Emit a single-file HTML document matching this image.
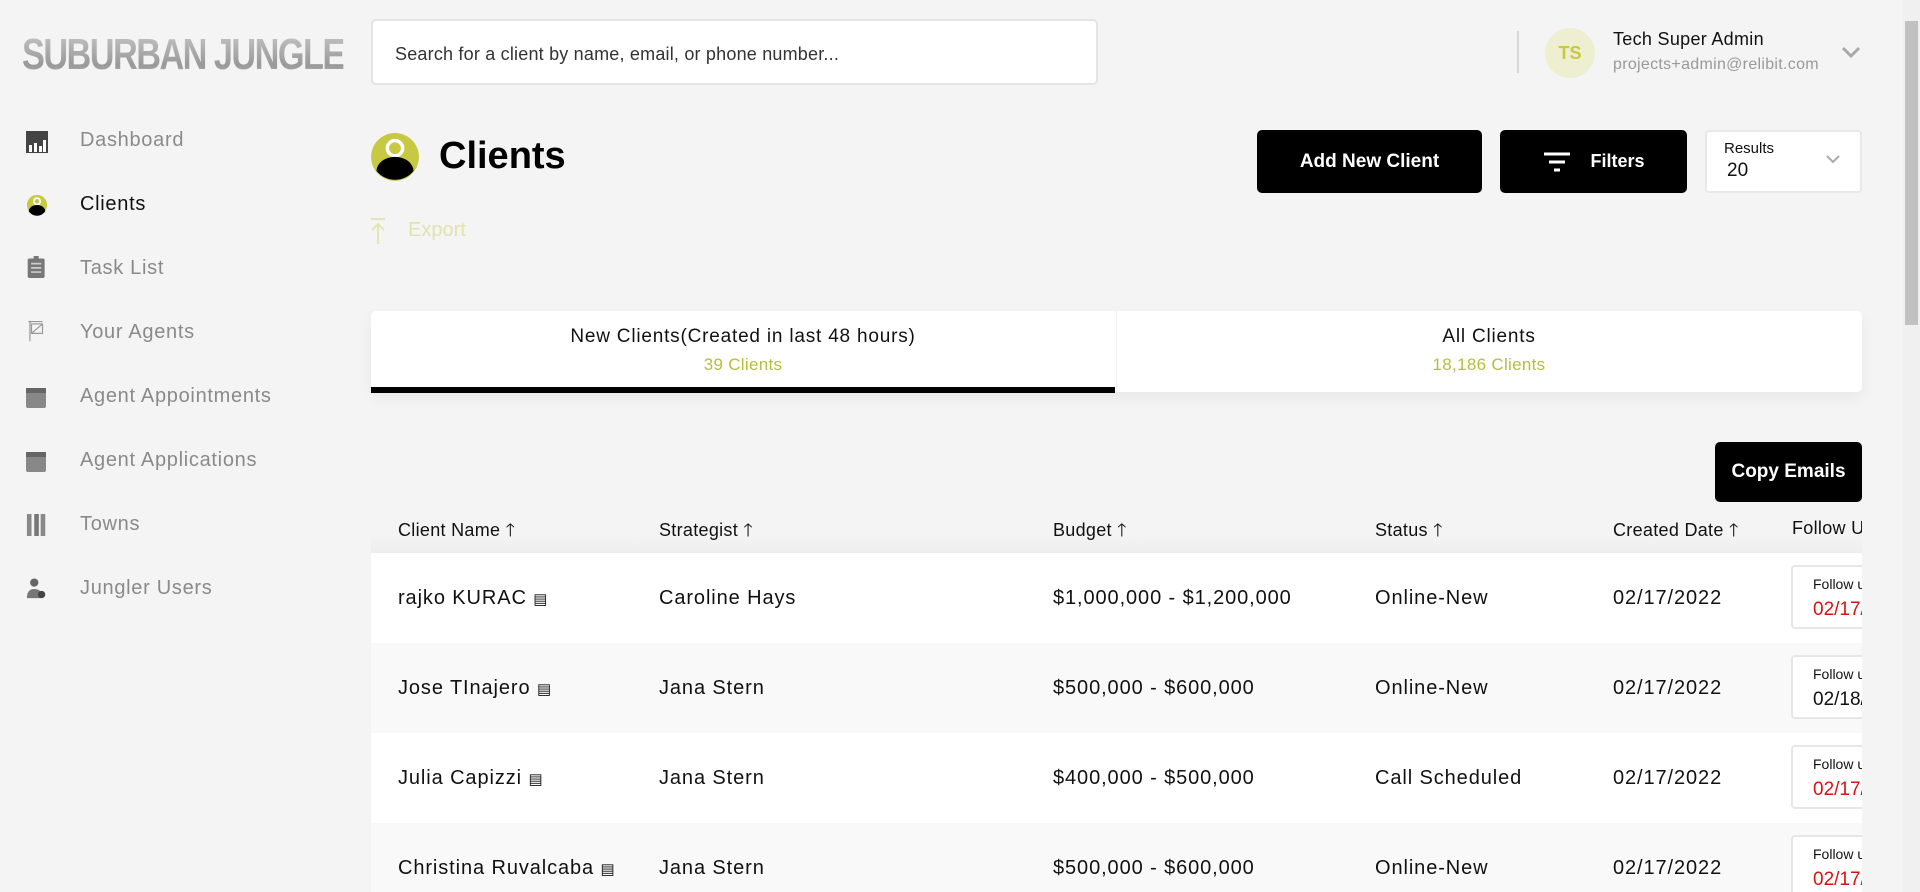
<!DOCTYPE html>
<html><head><meta charset="utf-8"><style>
*{box-sizing:border-box;margin:0;padding:0}
body{width:1920px;height:892px;overflow:hidden;background:#f4f4f4;font-family:"Liberation Sans",sans-serif;position:relative;color:#111}
.a{position:absolute}
.nav{position:absolute;left:80px;font-size:20px;letter-spacing:.7px;color:#8a8a8a}
.ic{position:absolute;left:26px;width:22px;height:22px}
.btn{position:absolute;background:#000;color:#fff;border-radius:5px;font-weight:bold;font-size:18px;display:flex;align-items:center;justify-content:center}
.th{position:absolute;top:518px;font-size:18px;letter-spacing:.3px;color:#111}
.row{position:absolute;left:371px;width:1491px;height:90px}
.row div{position:absolute;top:34px;font-size:20px;letter-spacing:.9px;color:#111}
.row .fu{position:absolute;left:1420px;top:12px;width:160px;height:64px;border:2px solid #e6e6e6;border-radius:4px;background:#fff;letter-spacing:0}
.fu span{position:absolute;left:20px;top:9px;font-size:14px}
.fu b{position:absolute;left:20px;top:32px;font-weight:normal;font-size:19px}
</style></head><body>
<div class="a" style="left:22px;top:30px;font-size:44px;font-weight:bold;color:#a9a9a9;letter-spacing:-2px;white-space:nowrap;transform:scaleX(.78);transform-origin:left;background:linear-gradient(#c8c8c8,#999 70%,#bbb);-webkit-background-clip:text;color:transparent">SUBURBAN JUNGLE</div>
<div class="a" style="left:371px;top:19px;width:727px;height:66px;background:#fff;border:2px solid #e4e4e4;border-radius:5px;font-size:18px;letter-spacing:.2px;color:#333;padding:23px 0 0 22px">Search for a client by name, email, or phone number...</div>

<svg class="ic" style="top:131px" viewBox="0 0 22 22"><rect width="22" height="24" fill="#444"/><rect x="3" y="14" width="3" height="7" fill="#fff"/><rect x="8" y="12" width="3" height="9" fill="#fff"/><rect x="13" y="15" width="3" height="6" fill="#fff"/><rect x="17" y="9" width="3" height="12" fill="#fff"/></svg>
<div class="nav" style="top:129px">Dashboard</div>
<svg class="ic" style="top:194px" viewBox="0 0 22 24"><circle cx="11" cy="12" r="11" fill="#c6c941"/><circle cx="11" cy="8" r="3.5" fill="none" stroke="#fff" stroke-width="2"/><path d="M2 19a9 7 0 0 1 18 0a11 11 0 0 1-18 0z" fill="#000"/></svg>
<div class="nav" style="top:193px;color:#111">Clients</div>
<svg class="ic" style="top:256px" viewBox="0 0 22 26"><rect y="3" width="20" height="23" rx="2" fill="#777"/><rect x="7" y="0" width="6" height="5" fill="#777"/><path d="M4 9h12M4 14h12M4 19h12" stroke="#ccc" stroke-width="2"/></svg>
<div class="nav" style="top:257px">Task List</div>
<svg class="ic" style="top:320px" viewBox="0 0 22 28"><path d="M2 1v26M0 2h18M4 5h14v12H4zM4 17l14-12" stroke="#999" fill="none" stroke-width="1.5"/></svg>
<div class="nav" style="top:321px">Your Agents</div>
<svg class="ic" style="top:386px" viewBox="0 0 22 22"><rect y="2" width="20" height="20" rx="2" fill="#888"/><rect y="2" width="20" height="5" fill="#666"/></svg>
<div class="nav" style="top:385px">Agent Appointments</div>
<svg class="ic" style="top:450px" viewBox="0 0 22 22"><rect y="2" width="20" height="20" rx="2" fill="#888"/><rect y="2" width="20" height="5" fill="#666"/></svg>
<div class="nav" style="top:449px">Agent Applications</div>
<svg class="ic" style="top:514px" viewBox="0 0 22 24"><rect x="0" y="0" width="5" height="24" fill="#888"/><rect x="8" y="0" width="5" height="24" fill="#777"/><rect x="15" y="0" width="5" height="24" fill="#888"/></svg>
<div class="nav" style="top:513px">Towns</div>
<svg class="ic" style="top:578px" viewBox="0 0 22 24"><circle cx="8" cy="5" r="4.5" fill="#666"/><path d="M0 22c0-8 4-10 8-10s7 2 8 4v6z" fill="#777"/><circle cx="16" cy="18" r="4" fill="#444"/></svg>
<div class="nav" style="top:577px">Jungler Users</div>

<div class="a" style="left:1517px;top:31px;width:2px;height:42px;background:#d8d8d8"></div>
<div class="a" style="left:1545px;top:28px;width:50px;height:50px;border-radius:50%;background:#eeefd0;color:#c6c941;font-size:18px;font-weight:bold;text-align:center;line-height:50px">TS</div>
<div class="a" style="left:1613px;top:29px;font-size:18px;letter-spacing:.3px;color:#111">Tech Super Admin</div>
<div class="a" style="left:1613px;top:56px;font-size:16px;letter-spacing:.3px;color:#999">projects+admin@relibit.com</div>
<svg class="a" style="left:1841px;top:45px" width="20" height="14" viewBox="0 0 20 14"><path d="M2 3l8 8 8-8" stroke="#aaa" stroke-width="3" fill="none"/></svg>
<div class="a" style="left:1903px;top:0;width:17px;height:892px;background:#f0f0f0"></div>
<div class="a" style="left:1905px;top:21px;width:13px;height:304px;background:#c1c1c1"></div>

<svg class="a" style="left:371px;top:133px" width="48" height="50" viewBox="0 0 22 23"><circle cx="11" cy="11" r="11" fill="#c6c941"/><circle cx="11" cy="7" r="3.5" fill="none" stroke="#fff" stroke-width="1.6"/><path d="M2.5 17.5a8.5 6.5 0 0 1 17 0a11 11 0 0 1-17 0z" fill="#000"/></svg>
<div class="a" style="left:439px;top:135px;font-size:38px;font-weight:bold;color:#000">Clients</div>
<svg class="a" style="left:370px;top:218px" width="16" height="26" viewBox="0 0 16 26"><path d="M1 1h14M8 26V6M2 12l6-6 6 6" stroke="#e3e5b5" stroke-width="2" fill="none"/></svg>
<div class="a" style="left:408px;top:219px;font-size:20px;color:#e0e3aa">Export</div>

<div class="btn" style="left:1257px;top:130px;width:225px;height:63px;font-size:19px">Add New Client</div>
<div class="btn" style="left:1500px;top:130px;width:187px;height:63px"><svg width="30" height="22" viewBox="0 0 30 22" style="margin-right:18px"><path d="M2 3h26M7 11h16M12 19h6" stroke="#fff" stroke-width="3"/></svg>Filters</div>
<div class="a" style="left:1705px;top:130px;width:157px;height:63px;background:#fff;border:2px solid #e8e8e8;border-radius:4px">
<div class="a" style="left:17px;top:8px;font-size:15px">Results</div><div class="a" style="left:20px;top:28px;font-size:19px">20</div>
<svg class="a" style="left:118px;top:22px" width="16" height="12"><path d="M2 2l6 6 6-6" stroke="#aaa" stroke-width="2" fill="none"/></svg></div>

<div class="a" style="left:371px;top:311px;width:1491px;height:81px;background:#fff;border-radius:5px;box-shadow:0 6px 14px rgba(0,0,0,.05)"></div>
<div class="a" style="left:371px;top:311px;width:744px;text-align:center;font-size:19px;letter-spacing:.8px;padding-top:15px">New Clients(Created in last 48 hours)<div style="color:#b8bd3a;font-size:17px;letter-spacing:.3px;margin-top:7px">39 Clients</div></div>
<div class="a" style="left:1116px;top:311px;width:746px;text-align:center;font-size:19px;letter-spacing:.8px;padding-top:15px">All Clients<div style="color:#b8bd3a;font-size:17px;letter-spacing:.3px;margin-top:7px">18,186 Clients</div></div>
<div class="a" style="left:371px;top:387px;width:744px;height:6px;background:#000"></div>
<div class="a" style="left:1116px;top:311px;width:1px;height:81px;background:#eee"></div>

<div class="btn" style="left:1715px;top:442px;width:147px;height:60px;font-size:19px">Copy Emails</div>
<div class="a" style="left:371px;top:535px;width:1491px;height:18px;background:linear-gradient(#f4f4f4,#ededed)"></div>
<div class="th" style="left:398px">Client Name 🡑</div>
<div class="th" style="left:659px">Strategist 🡑</div>
<div class="th" style="left:1053px">Budget 🡑</div>
<div class="th" style="left:1375px">Status 🡑</div>
<div class="th" style="left:1613px">Created Date 🡑</div>
<div class="th" style="left:1792px;width:70px;overflow:hidden;white-space:nowrap">Follow Up</div>

<div style="position:absolute;left:0;top:0;width:1862px;height:892px;overflow:hidden">
<div class="row" style="top:553px;background:#fff"><div style="left:27px">rajko KURAC <small style="font-size:15px">▤</small></div><div style="left:288px">Caroline Hays</div><div style="left:682px">$1,000,000 - $1,200,000</div><div style="left:1004px">Online-New</div><div style="left:1242px">02/17/2022</div><div class="fu"><span>Follow up</span><b style="color:#d11">02/17/2022</b></div></div>
<div class="row" style="top:643px;background:#f9f9f9"><div style="left:27px">Jose TInajero <small style="font-size:15px">▤</small></div><div style="left:288px">Jana Stern</div><div style="left:682px">$500,000 - $600,000</div><div style="left:1004px">Online-New</div><div style="left:1242px">02/17/2022</div><div class="fu"><span>Follow up</span><b>02/18/2022</b></div></div>
<div class="row" style="top:733px;background:#fff"><div style="left:27px">Julia Capizzi <small style="font-size:15px">▤</small></div><div style="left:288px">Jana Stern</div><div style="left:682px">$400,000 - $500,000</div><div style="left:1004px">Call Scheduled</div><div style="left:1242px">02/17/2022</div><div class="fu"><span>Follow up</span><b style="color:#d11">02/17/2022</b></div></div>
<div class="row" style="top:823px;background:#f9f9f9"><div style="left:27px">Christina Ruvalcaba <small style="font-size:15px">▤</small></div><div style="left:288px">Jana Stern</div><div style="left:682px">$500,000 - $600,000</div><div style="left:1004px">Online-New</div><div style="left:1242px">02/17/2022</div><div class="fu"><span>Follow up</span><b style="color:#d11">02/17/2022</b></div></div>
</div>
</body></html>
